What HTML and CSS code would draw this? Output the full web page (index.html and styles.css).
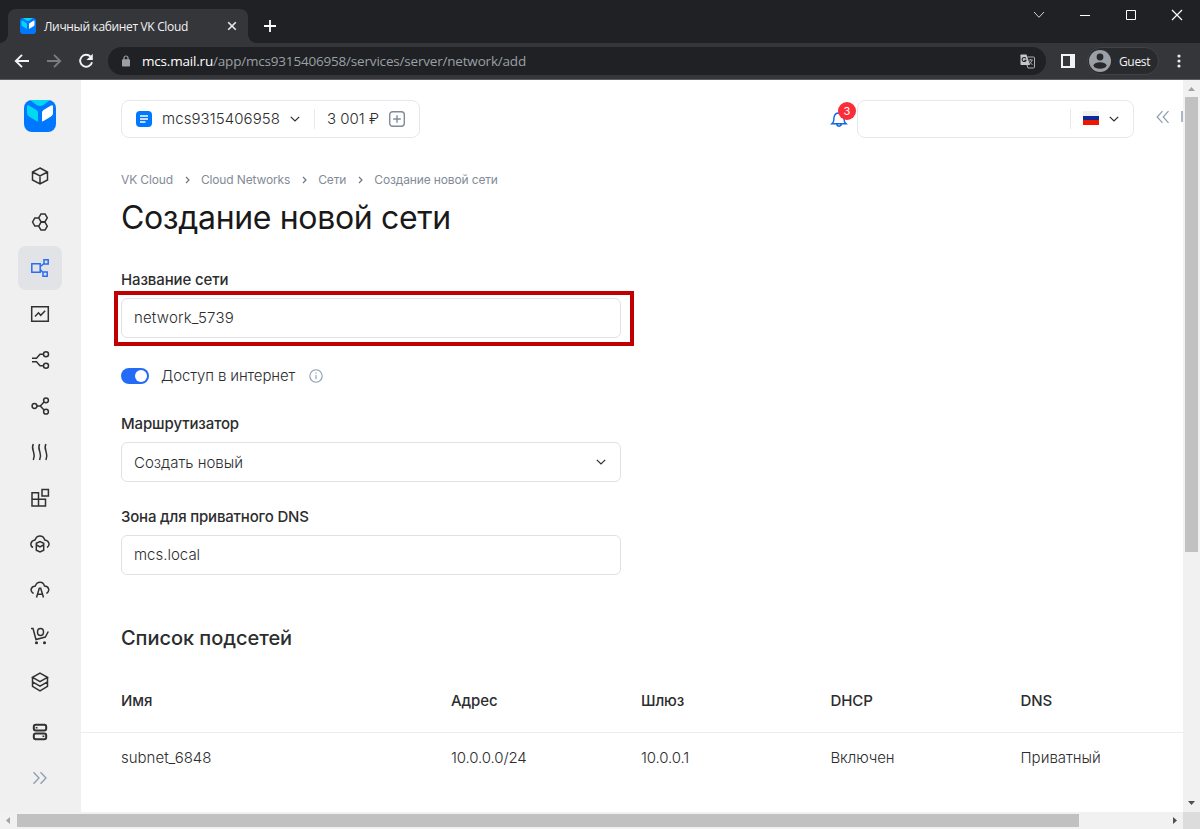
FILE: index.html
```html
<!DOCTYPE html>
<html lang="ru">
<head>
<meta charset="utf-8">
<title>Личный кабинет VK Cloud</title>
<link rel="stylesheet" href="styles.css">
</head>
<body>
<div class="window">
  <header class="tabbar">
    <div class="tab">
      <svg class="favicon" viewBox="0 0 32 32"><rect width="32" height="32" rx="6" fill="#07f"/><path d="M6 0h20l-7 5.200q-3 1.600-6 0z" fill="#00d9f0"/><path d="M3 6.500q0-2 2-1l7.500 4.500q1.500 1 1.500 2.500v8q0 1.500-1.500.5L5 16.500q-2-1.200-2-3.500z" fill="#00d9f0"/><path d="M29 6.500q0-2-2-1L19.500 10Q18 11 18 12.500v8q0 1.500 1.500.5l7.500-4.500q2-1.200 2-3.500z" fill="#fff"/></svg>
      <span class="tab-title">Личный кабинет VK Cloud</span>
      <svg class="tab-close" viewBox="0 0 10 10"><path d="M1.200 1.200l7.600 7.600M8.800 1.200L1.200 8.800" stroke="#e8eaed" stroke-width="1.600"/></svg>
    </div>
    <svg class="new-tab" viewBox="0 0 12 12"><path d="M6 0v12M0 6h12" stroke="#fff" stroke-width="1.800"/></svg>
    <div class="window-controls">
      <svg viewBox="0 0 12 12"><path d="M1 3l5 5.300L11 3" fill="none" stroke="#d5d6d8"/></svg>
      <svg viewBox="0 0 12 12"><path d="M1 6.500h10" stroke="#fff"/></svg>
      <svg viewBox="0 0 12 12"><path d="M1.500 1.500h9v9h-9z" fill="none" stroke="#fff"/></svg>
      <svg viewBox="0 0 12 12"><path d="M1 1l10 10M11 1L1 11" stroke="#fff" stroke-width="1.200"/></svg>
    </div>
  </header>
  <nav class="toolbar">
    <svg class="nav-icon" viewBox="0 0 16 16"><path d="M15 8H2M8 1.800L1.800 8 8 14.200" fill="none" stroke="#f1f3f4" stroke-width="1.900"/></svg>
    <svg class="nav-icon" viewBox="0 0 16 16"><path d="M1 8h13M8 1.800L14.200 8 8 14.200" fill="none" stroke="#7b7c7f" stroke-width="1.900"/></svg>
    <svg class="nav-icon" viewBox="0 0 16 16"><path d="M12.600 3.700A6 6 0 1 0 14 9.200" fill="none" stroke="#f1f3f4" stroke-width="1.900"/><path d="M14.800.8v6.300H8.500z" fill="#f1f3f4"/></svg>
    <div class="address">
      <svg class="lock" viewBox="0 0 8 12"><path d="M2 5V3a2 2 0 0 1 4 0v2" fill="none" stroke="#9aa0a6" stroke-width="1.200"/><rect y="4.300" width="8" height="7.200" rx=".8" fill="#9aa0a6"/></svg>
      <span class="url"><b>mcs.mail.ru</b>/app/mcs9315406958/services/server/network/add</span>
      <svg class="translate" viewBox="0 0 15 15"><path d="M1.200.5h5.300L10 11H1.200Q.5 11 .5 10.300V1.200Q.5.5 1.200.5z" fill="#c4c7ca"/><path d="M7.300 3h6.200q1 0 1 1v9q0 1-1 1H8L7 11" fill="none" stroke="#aeb1b5"/><path d="M5.800 4.500A2 2 0 1 0 6 6.200H4.300" fill="none" stroke="#202124" stroke-width="1.100"/><path d="M8.800 6h4M10.800 5v1M12 6.200q-.8 2.600-3 4M9.500 7.500l3 3.500" fill="none" stroke="#aeb1b5" stroke-width=".9"/></svg>
    </div>
    <svg class="panel-icon" viewBox="0 0 14 14"><path d="M0 0h14v14H0zM2 2v10h7V2z" fill="#f1f3f4" fill-rule="evenodd"/></svg>
    <div class="profile">
      <svg viewBox="0 0 22 22"><circle cx="11" cy="11" r="11" fill="#9aa0a6"/><circle cx="11" cy="7" r="3.400" fill="#292a2d"/><ellipse cx="11" cy="15.500" rx="6.500" ry="3.200" fill="#292a2d"/></svg>
      <span>Guest</span>
    </div>
    <svg class="more" viewBox="0 0 4 14"><g fill="#e8eaed"><circle cx="2" cy="2" r="1.600"/><circle cx="2" cy="7" r="1.600"/><circle cx="2" cy="12" r="1.600"/></g></svg>
  </nav>
  <div class="viewport">
    <aside class="sidebar">
      <svg class="logo" viewBox="0 0 32 32"><rect width="32" height="32" rx="8" fill="#07f"/><path d="M6 0h20l-7 5.200q-3 1.600-6 0z" fill="#00d9f0"/><path d="M3 6.500q0-2 2-1l7.500 4.500q1.500 1 1.500 2.500v8q0 1.500-1.500.5L5 16.500q-2-1.200-2-3.500z" fill="#00d9f0"/><path d="M29 6.500q0-2-2-1L19.500 10Q18 11 18 12.500v8q0 1.500 1.500.5l7.500-4.500q2-1.200 2-3.500z" fill="#fff"/></svg>
      <a class="side-item"><svg viewBox="0 0 20 20"><path d="M10 2l7.500 4v8L10 18l-7.500-4V6zM2.500 6L10 10l7.500-4M10 10v8"/></svg></a>
      <a class="side-item"><svg viewBox="0 0 20 20"><path d="M11 1.900h4l2.300 3.900L15 9.700h-4L8.700 5.800zM11 10.300h4l2.300 3.900-2.300 3.900h-4l-2.300-3.900zM4.800 6h4L11 10l-2.200 4h-4l-2.200-4z"/></svg></a>
      <a class="side-item active"><svg viewBox="0 0 20 20"><path d="M1.800 5.800h8.400v8.400H1.800zM14 1.800h4.200V6H14zM13 14h4.200v4.200H13zM10.300 8.500L14 5.700M10.300 11.500L13 14.500"/></svg></a>
      <a class="side-item"><svg viewBox="0 0 20 20"><path d="M1.700 2.700h16.600v14.600H1.700zM5 12.500L8.500 8.800l2.200 2.500 4.500-4.500"/></svg></a>
      <a class="side-item"><svg viewBox="0 0 20 20"><circle cx="16" cy="4.300" r="2.500"/><circle cx="16" cy="15.700" r="2.500"/><path d="M2 8.200h4.500L10 4.300h3.500M2 11.800h4.500l3.500 3.900h3.500"/></svg></a>
      <a class="side-item"><svg viewBox="0 0 20 20"><circle cx="4.500" cy="10" r="2.400"/><circle cx="16" cy="4.300" r="2.400"/><circle cx="16" cy="15.700" r="2.400"/><path d="M7 10h3.300M14 6l-3.700 4L14 14"/></svg></a>
      <a class="side-item"><svg viewBox="0 0 20 20"><path d="M3.300 2c-1.700 3.500-.6 5.500.3 8s.9 5-.3 8M9.600 2c-1.700 3.500-.6 5.500.3 8s.9 5-.3 8M15.900 2c-1.700 3.500-.6 5.500.3 8s.9 5-.3 8"/></svg></a>
      <a class="side-item"><svg viewBox="0 0 20 20"><path d="M2 4.800h6.500v13.100H2zM2 11.300h13.500v6.600H8.500v-6.600M12 1.500h6.400V8H12z"/></svg></a>
      <a class="side-item"><svg viewBox="0 0 20 20"><path d="M3 13.500C-.7 11.500.8 6.500 5 6 7 .8 13 .8 14.800 6c4.400.5 5.700 5.300 2.200 7.500M6.300 9.200L10 7.500l3.700 1.700v7L10 18l-3.700-1.800zM6.500 11L10 13l3.500-2"/></svg></a>
      <a class="side-item"><svg viewBox="0 0 20 20"><path d="M3.500 13.500C-.5 11 .8 6.500 5.300 6 7 1.300 13 .8 14.500 6c4.800.2 5.500 5.200 2 7.500M6.500 17.500l2.800-9.300h1.400l2.800 9.300M7.500 14.300h5"/></svg></a>
      <a class="side-item"><svg viewBox="0 0 20 20"><path d="M1 2.500h2l3 11 9.300-2.500 3-5.500"/><ellipse cx="10.500" cy="6" rx="3" ry="3.500"/><circle class="dot" cx="6.500" cy="16.800" r=".8"/><circle class="dot" cx="14.500" cy="16.800" r=".8"/></svg></a>
      <a class="side-item"><svg viewBox="0 0 20 20"><path d="M10 1.200l7.500 4.100L10 9.700 2.500 5.300zM2.500 5.300v9L10 18.800l7.500-4.500v-9M2.500 9.800L10 14.200l7.500-4.400"/></svg></a>
      <a class="side-item servers"><svg viewBox="0 0 20 20"><g stroke-width="2"><rect x="3.800" y="2.800" width="12.400" height="5.800" rx="2"/><rect x="3.800" y="11.400" width="12.400" height="5.800" rx="2"/></g><path d="M5.700 5.700h1.800M12.500 14.300h1.800"/></svg></a>
      <a class="side-item expand"><svg viewBox="0 0 20 20"><path d="M3.500 4.300L9 10l-5.500 5.700M10.500 4.300L16 10l-5.500 5.700"/></svg></a>
    </aside>
    <main class="page">
      <div class="topbar">
        <div class="project">
          <svg class="project-icon" viewBox="0 0 16 16"><rect width="16" height="16" rx="4" fill="#07f"/><path d="M4 5h8M4 8h8M4 11h5.500" stroke="#fff" stroke-width="1.300"/></svg>
          <span class="project-name">mcs9315406958</span>
          <svg class="chevron" viewBox="0 0 10 6"><path d="M.8.800L5 5 9.200.8"/></svg>
          <span class="balance">3 001 ₽</span>
          <svg class="add" viewBox="0 0 16 16"><rect x=".7" y=".7" width="14.600" height="14.600" rx="3"/><path d="M8 4.200v7.600M4.200 8h7.600"/></svg>
        </div>
        <div class="bell">
          <svg viewBox="0 0 18 18"><path d="M3 12.500c1-1 .8-3 1-5C4.300 4.500 6 3 9 3s4.700 1.500 5 4.500c.2 2 0 4 1 5l1.200 1.200H1.800zM6.500 14.500q2.500 3.500 5 0"/></svg>
          <span class="badge">3</span>
        </div>
        <div class="account">
          <div class="locale">
            <span class="flag"></span>
            <svg class="chevron" viewBox="0 0 10 6"><path d="M.8.800L5 5 9.200.8"/></svg>
          </div>
        </div>
        <svg class="collapse" viewBox="0 0 14 14"><path d="M6.500 1.200L1.200 7l5.300 5.800M12.500 1.200L7.200 7l5.300 5.800"/></svg>
        <span class="clipped"></span>
      </div>
      <nav class="crumbs">
        <span>VK Cloud</span><svg viewBox="0 0 5 8"><path d="M1 1l3 3-3 3"/></svg>
        <span>Cloud Networks</span><svg viewBox="0 0 5 8"><path d="M1 1l3 3-3 3"/></svg>
        <span>Сети</span><svg viewBox="0 0 5 8"><path d="M1 1l3 3-3 3"/></svg>
        <span>Создание новой сети</span>
      </nav>
      <h1 class="title">Создание новой сети</h1>
      <form class="form">
        <label class="label">Название сети</label>
        <div class="field highlighted">network_5739</div>
        <div class="switch-row">
          <span class="switch"></span>
          <span class="switch-text">Доступ в интернет</span>
          <svg class="info" viewBox="0 0 14 14"><circle cx="7" cy="7" r="6.200"/><path d="M7 6v4.300M7 3.500v1.300"/></svg>
        </div>
        <label class="label">Маршрутизатор</label>
        <div class="field select"><span>Создать новый</span><svg class="chevron" viewBox="0 0 10 6"><path d="M.8.800L5 5 9.200.8"/></svg></div>
        <label class="label zone">Зона для приватного DNS</label>
        <div class="field dns">mcs.local</div>
      </form>
      <h2 class="subtitle">Список подсетей</h2>
      <div class="table">
        <div class="row head"><span>Имя</span><span>Адрес</span><span>Шлюз</span><span>DHCP</span><span>DNS</span></div>
        <div class="row"><span>subnet_6848</span><span class="ip">10.0.0.0/24</span><span class="ip">10.0.0.1</span><span class="state">Включен</span><span>Приватный</span></div>
      </div>
    </main>
    <div class="vscroll">
      <svg viewBox="0 0 17 17"><path d="M5 11l3.500-4 3.500 4z" fill="#a3a3a3"/></svg>
      <span class="vthumb"></span>
      <svg class="down" viewBox="0 0 17 17"><path d="M5 6l3.500 4L12 6z" fill="#505050"/></svg>
    </div>
  </div>
  <div class="hscroll">
    <svg viewBox="0 0 17 17"><path d="M10 5L6 8.500l4 3.500z" fill="#a3a3a3"/></svg>
    <span class="hthumb"></span>
    <svg class="right" viewBox="0 0 17 17"><path d="M7 5l4 3.500L7 12z" fill="#505050"/></svg>
    <span class="corner"></span>
  </div>
</div>
</body>
</html>
```
FILE: styles.css
```css
* { box-sizing: border-box; }
body { margin: 0; font-family: Inter, "Liberation Sans", sans-serif; color: #2c2d2e; }
svg { display: block; flex: none; fill: none; }
.window { width: 1200px; height: 829px; display: flex; flex-direction: column; overflow: hidden; background: #fff; }

/* Browser frame */
.tabbar { height: 43px; display: flex; align-items: flex-start; padding-left: 8px; background: #202124; }
.tab { position: relative; width: 240px; height: 34px; margin-top: 9px; padding: 0 11px 0 12px; display: flex; align-items: center; background: #35363a; border-radius: 8px 8px 0 0; }
.tab::before, .tab::after { content: ""; position: absolute; bottom: 0; width: 8px; height: 8px; }
.tab::before { left: -8px; background: radial-gradient(circle at 0 0, transparent 7.5px, #35363a 8px); }
.tab::after { right: -8px; background: radial-gradient(circle at 100% 0, transparent 7.5px, #35363a 8px); }
.favicon { width: 16px; height: 16px; }
.tab-title { flex: 1; margin-left: 8px; font: 12px "Open Sans", sans-serif; letter-spacing: -.34px; color: #f1f3f4; white-space: nowrap; }
.tab-close { width: 10px; height: 10px; }
.new-tab { width: 12px; height: 12px; margin: 20px 0 0 16px; }
.window-controls { display: flex; gap: 34px; margin: 9px 17px 0 auto; }
.window-controls svg { width: 12px; height: 12px; }
.toolbar { height: 37px; padding: 0 19px 0 14px; display: flex; align-items: center; background: #35363a; border-bottom: 1px solid #5d5e61; }
.nav-icon { width: 16px; height: 16px; margin-right: 16px; }
.address { width: 938px; height: 28px; margin-left: -2px; padding: 0 11px 0 14px; display: flex; align-items: center; border-radius: 14px; background: #202124; }
.lock { width: 8px; height: 12px; }
.url { flex: 1; margin-left: 12px; font: 13.5px "Open Sans", sans-serif; letter-spacing: -.19px; color: #9aa0a6; white-space: nowrap; }
.url b { font-weight: 400; color: #fff; }
.translate { width: 15px; height: 15px; }
.panel-icon { width: 14px; height: 14px; margin-left: 15px; }
.profile { width: 72px; height: 28px; margin-left: 12px; padding-left: 3px; display: flex; align-items: center; gap: 8px; border: 1px solid #414246; border-radius: 14px; background: #292a2d; font: 12px "Open Sans", sans-serif; letter-spacing: -.35px; color: #f1f3f4; }
.profile svg { width: 22px; height: 22px; margin-left: -2px; }
.more { width: 4px; height: 14px; margin-left: auto; }

/* Application */
.viewport { height: 732px; display: flex; }
.sidebar { width: 81px; padding: 20px 1px 0 0; display: flex; flex-direction: column; align-items: center; gap: 2px; background: #f0f0f0; }
.logo { width: 32px; height: 32px; margin-bottom: 20px; }
.side-item { width: 44px; height: 44px; flex: none; display: flex; align-items: center; justify-content: center; border-radius: 8px; }
.side-item svg { width: 20px; height: 20px; stroke: #303132; stroke-width: 1.5; }
.side-item .dot { fill: #303132; }
.active { background: #e1e3e6; }
.side-item.active svg { stroke: #2a6df5; }
.servers { margin-top: 4px; }
.side-item.expand svg { stroke: #8c9cb0; stroke-width: 1.3; }
.page { width: 1102px; padding-top: 20px; overflow: hidden; }
.topbar { height: 38px; display: flex; align-items: center; padding-left: 40px; }
.project { width: 299px; height: 38px; padding: 0 14px; display: flex; align-items: center; border: 1px solid #e7e8ec; border-radius: 8px; }
.project-icon { width: 16px; height: 16px; }
.project-name { width: 120px; margin: -1px 0 0 10px; font-size: 15px; font-weight: 350; letter-spacing: .08px; }
.chevron { width: 10px; height: 6px; stroke: #2c2d2e; stroke-width: 1.2; }
.project .chevron { margin-left: 8px; }
.balance { height: 20px; margin-left: 14px; padding-left: 12px; border-left: 1px solid #e7e8ec; font-size: 15px; font-weight: 300; line-height: 19px; white-space: nowrap; }
.add { width: 16px; height: 16px; margin-left: auto; stroke: #7f8b99; stroke-width: 1.4; }
.bell { position: relative; width: 18px; height: 18px; margin-left: 410px; }
.bell svg { width: 18px; height: 18px; stroke: #1267e0; stroke-width: 1.4; }
.badge { position: absolute; left: 8px; top: -8px; width: 18px; height: 18px; border-radius: 50%; background: #fc2c38; color: #fff; font-size: 11px; line-height: 18px; text-align: center; }
.account { width: 277px; height: 38px; margin-left: 9px; display: flex; align-items: center; justify-content: flex-end; border: 1px solid #e7e8ec; border-radius: 8px; }
.locale { height: 20px; padding: 0 14px 0 12px; display: flex; align-items: center; gap: 10px; border-left: 1px solid #e7e8ec; }
.flag { width: 16px; height: 14px; margin-top: -3px; background: linear-gradient(#f0f0f0 0 5px, #0b2a9b 5px 9px, #ef1600 9px); }
.collapse { width: 14px; height: 14px; margin: -4px 0 0 22px; stroke: #8c9cb0; stroke-width: 1.2; }
.clipped { width: 2px; height: 11px; margin: -5px 0 0 11px; background: #aeb8c5; }
.crumbs { height: 20px; margin-top: 32px; padding: 0 0 1px 40px; display: flex; align-items: center; font-size: 12px; letter-spacing: -.14px; color: #828b98; white-space: nowrap; }
.crumbs svg { width: 5px; height: 8px; margin: 0 11px 0 12px; stroke: #6c7684; stroke-width: 1.2; }
.title { margin: 8px 0 0 40px; font-size: 32px; line-height: 40px; font-weight: 400; letter-spacing: -.35px; color: #19191a; }
.form { width: 500px; margin: 32px 0 0 40px; display: flex; flex-direction: column; }
.label { height: 20px; margin-bottom: 8px; font-size: 15px; line-height: 20px; font-weight: 500; letter-spacing: -.12px; }
.zone { letter-spacing: -.18px; }
.field { position: relative; height: 40px; padding: 0 14px 0 12px; display: flex; align-items: center; border: 1px solid #e1e1e6; border-radius: 6px; font-size: 15px; font-weight: 300; }
.highlighted, .dns { padding-bottom: 2px; }
.highlighted { letter-spacing: .17px; }
.highlighted::after { content: ""; position: absolute; left: -8px; top: -8px; width: 512px; height: 47px; border: 4px solid #c00000; }
.switch-row { height: 20px; margin: 28px 0; display: flex; align-items: center; font-size: 15px; font-weight: 300; letter-spacing: -.12px; }
.switch { width: 28px; height: 16px; display: flex; justify-content: flex-end; padding: 2px; border-radius: 8px; background: #246cf5; }
.switch::after { content: ""; width: 12px; height: 12px; border-radius: 50%; background: #fff; }
.switch-text { margin: -1px 0 0 12px; }
.info { width: 14px; height: 14px; margin-left: 14px; stroke: #8c9cb0; stroke-width: 1.1; }
.select { justify-content: space-between; margin-bottom: 25px; }
.subtitle { margin: 51px 0 0 40px; font-size: 20px; line-height: 24px; font-weight: 500; letter-spacing: -.05px; }
.table { margin-top: 20px; }
.row { height: 49px; padding-left: 40px; display: grid; grid-template-columns: 330px 190px 189.500px 190px 1fr; align-items: center; font-size: 15px; font-weight: 300; }
.row.head { height: 63px; padding-bottom: 2px; font-weight: 500; letter-spacing: -.1px; border-bottom: 1px solid #ecedf0; }
.ip, .state { letter-spacing: -.12px; }

/* Scrollbars */
.vscroll { width: 17px; display: flex; flex-direction: column; align-items: center; background: #f1f1f1; }
.vscroll svg, .hscroll svg { width: 17px; height: 17px; }
.vthumb { width: 13px; height: 455px; background: #c1c1c1; }
.down { margin-top: auto; }
.hscroll { height: 17px; display: flex; align-items: center; background: #f1f1f1; }
.hthumb { width: 1062px; height: 13px; background: #c1c1c1; }
.right { margin-left: auto; }
.corner { width: 17px; height: 17px; background: #dcdcdc; }
```
